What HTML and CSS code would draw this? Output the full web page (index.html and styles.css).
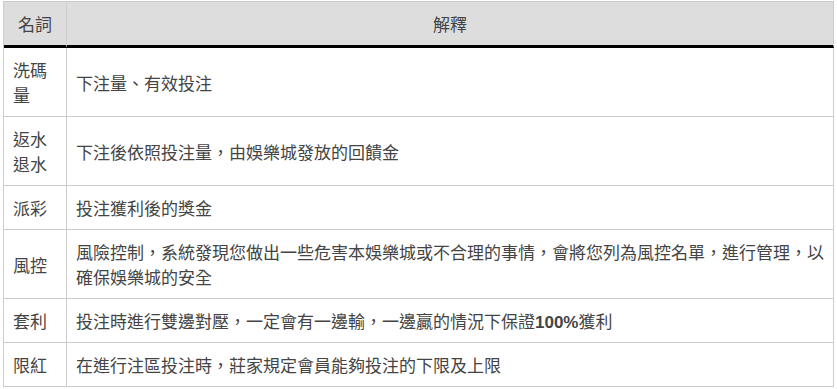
FILE: index.html
```html
<!DOCTYPE html>
<html lang="zh-Hant">
<head>
<meta charset="utf-8">
<link rel="stylesheet" href="styles.css">
</head>
<body>
<table class="glossary">
  <thead>
    <tr><th class="term">名詞</th><th>解釋</th></tr>
  </thead>
  <tbody>
    <tr><td class="term">洗碼量</td><td>下注量、有效投注</td></tr>
    <tr><td class="term">返水退水</td><td>下注後依照投注量，由娛樂城發放的回饋金</td></tr>
    <tr><td class="term">派彩</td><td>投注獲利後的獎金</td></tr>
    <tr><td class="term">風控</td><td>風險控制，系統發現您做出一些危害本娛樂城或不合理的事情，會將您列為風控名單，進行管理，以確保娛樂城的安全</td></tr>
    <tr><td class="term">套利</td><td>投注時進行雙邊對壓，一定會有一邊輸，一邊贏的情況下保證<span class="num">100%</span>獲利</td></tr>
    <tr><td class="term">限紅</td><td>在進行注區投注時，莊家規定會員能夠投注的下限及上限</td></tr>
  </tbody>
</table>
</body>
</html>
```

FILE: styles.css
```css
html, body {
  margin: 0;
  background: #fff;
}
body {
  padding: 1px 4px 0 3px;
  font-family: "Noto Sans CJK TC", "Noto Sans", sans-serif;
  font-size: 17px;
  color: #444;
}
.glossary {
  width: 831px;
  table-layout: fixed;
  border-collapse: separate;
  border-spacing: 0;
  border-top: 1px solid #ccc;
  border-left: 1px solid #ccc;
}
.glossary th,
.glossary td {
  box-sizing: border-box;
  border-right: 1px solid #ccc;
  border-bottom: 1px solid #ccc;
  padding: 9px 9px 9px 9px;
  line-height: 25px;
  text-align: left;
  vertical-align: middle;
  font-weight: 400;
}
.glossary .term {
  width: 63px;
}
.glossary th {
  background: #ddd;
  text-align: center;
  color: #444;
  border-bottom: 3px solid #000;
}
.num {
  font-family: "Liberation Sans", sans-serif;
  font-weight: 700;
  line-height: 1;
}
```
